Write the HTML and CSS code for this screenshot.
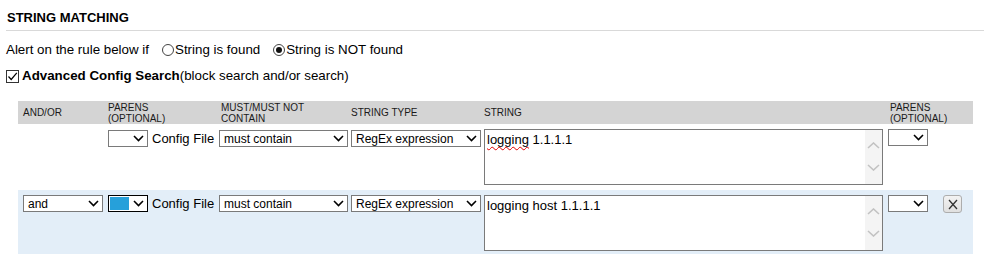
FILE: index.html
```html
<!DOCTYPE html>
<html lang="en">
<head>
  <meta charset="UTF-8" />
  <title>String Matching</title>
  <link rel="stylesheet" href="styles.css">
</head>
<body>
  <div class="page">
    <h3 class="section-title">STRING MATCHING</h3>

    <div class="alert-row">
      Alert on the rule below if
      <span class="radio-opt"><span class="radio"></span>String is found</span>
      <span class="radio-opt"><span class="radio checked"></span>String is NOT found</span>
    </div>

    <div class="check-row">
      <span class="checkbox">
        <svg width="11" height="11" viewBox="0 0 11 11"><path d="M1.5 5.5 L4.2 8.5 L9.8 1.8" fill="none" stroke="#000" stroke-width="1.2"/></svg>
      </span>
      <b>Advanced Config Search</b>(block search and/or search)
    </div>

    <div class="rules">
      <!-- column headings -->
      <div class="rules-head">
        <div>AND/OR</div>
        <div>PARENS<br>(OPTIONAL)</div>
        <div class="head-shift">MUST/MUST NOT<br>CONTAIN</div>
        <div>STRING TYPE</div>
        <div>STRING</div>
        <div class="head-shift">PARENS<br>(OPTIONAL)</div>
        <div></div>
      </div>

      <!-- first rule -->
      <div class="rule-row">
        <div></div>
        <div class="parens-cell low">
          <div class="select sel-parens"><span></span><svg class="chev" width="11" height="7" viewBox="0 0 11 7"><path d="M1 1 L5.5 5.5 L10 1" fill="none" stroke="#000" stroke-width="1.6"/></svg></div>
          <span class="src-label">Config File</span>
        </div>
        <div class="low"><div class="select sel-must"><span>must contain</span><svg class="chev" width="11" height="7" viewBox="0 0 11 7"><path d="M1 1 L5.5 5.5 L10 1" fill="none" stroke="#000" stroke-width="1.6"/></svg></div></div>
        <div class="low"><div class="select sel-type"><span>RegEx expression</span><svg class="chev" width="11" height="7" viewBox="0 0 11 7"><path d="M1 1 L5.5 5.5 L10 1" fill="none" stroke="#000" stroke-width="1.6"/></svg></div></div>
        <div class="textbox">
          <div class="textbox-text"><span class="spell">logging</span> 1.1.1.1</div>
          <div class="scrollbar">
            <svg width="13" height="7" viewBox="0 0 13 7"><path d="M1 6 L6.5 1 L12 6" fill="none" stroke="#c2c2c2" stroke-width="1.6"/></svg>
            <svg width="13" height="7" viewBox="0 0 13 7"><path d="M1 1 L6.5 6 L12 1" fill="none" stroke="#c2c2c2" stroke-width="1.6"/></svg>
          </div>
        </div>
        <div><div class="select sel-parens"><span></span><svg class="chev" width="11" height="7" viewBox="0 0 11 7"><path d="M1 1 L5.5 5.5 L10 1" fill="none" stroke="#000" stroke-width="1.6"/></svg></div></div>
        <div></div>
      </div>

      <!-- second rule -->
      <div class="rule-row alt">
        <div><div class="select sel-andor"><span>and</span><svg class="chev" width="11" height="7" viewBox="0 0 11 7"><path d="M1 1 L5.5 5.5 L10 1" fill="none" stroke="#000" stroke-width="1.6"/></svg></div></div>
        <div class="parens-cell">
          <div class="select sel-parens focused"><span class="picked"></span><svg class="chev" width="11" height="7" viewBox="0 0 11 7"><path d="M1 1 L5.5 5.5 L10 1" fill="none" stroke="#000" stroke-width="1.6"/></svg></div>
          <span class="src-label">Config File</span>
        </div>
        <div><div class="select sel-must"><span>must contain</span><svg class="chev" width="11" height="7" viewBox="0 0 11 7"><path d="M1 1 L5.5 5.5 L10 1" fill="none" stroke="#000" stroke-width="1.6"/></svg></div></div>
        <div><div class="select sel-type"><span>RegEx expression</span><svg class="chev" width="11" height="7" viewBox="0 0 11 7"><path d="M1 1 L5.5 5.5 L10 1" fill="none" stroke="#000" stroke-width="1.6"/></svg></div></div>
        <div class="textbox">
          <div class="textbox-text">logging host 1.1.1.1</div>
          <div class="scrollbar">
            <svg width="13" height="7" viewBox="0 0 13 7"><path d="M1 6 L6.5 1 L12 6" fill="none" stroke="#c2c2c2" stroke-width="1.6"/></svg>
            <svg width="13" height="7" viewBox="0 0 13 7"><path d="M1 1 L6.5 6 L12 1" fill="none" stroke="#c2c2c2" stroke-width="1.6"/></svg>
          </div>
        </div>
        <div><div class="select sel-parens"><span></span><svg class="chev" width="11" height="7" viewBox="0 0 11 7"><path d="M1 1 L5.5 5.5 L10 1" fill="none" stroke="#000" stroke-width="1.6"/></svg></div></div>
        <div>
          <button class="remove-btn" type="button" title="Remove">
            <svg width="10" height="11" viewBox="0 0 10 11"><path d="M1 1 L9 10 M9 1 L1 10" fill="none" stroke="#333" stroke-width="1.3"/></svg>
          </button>
        </div>
      </div>
    </div>
  </div>
</body>
</html>
```

FILE: styles.css
```css
body {
  margin: 0;
  font-family: "Liberation Sans", Arial, sans-serif;
  font-size: 13.33px;
  color: #000;
  background: #fff;
}

.page {
  padding: 10px 0 0 6px;
}

.section-title {
  margin: 0;
  padding: 0 0 4px 1px;
  font-size: 13px;
  line-height: 16px;
  font-weight: bold;
  border-bottom: 1px solid #d9d9d9;
}

.alert-row {
  margin-top: 11px;
  line-height: 16px;
  display: flex;
  align-items: center;
}

.radio-opt {
  display: flex;
  align-items: center;
  margin-left: 13px;
}

.radio {
  width: 12px;
  height: 12px;
  box-sizing: border-box;
  border: 1px solid #444;
  border-radius: 50%;
  margin-right: 1px;
  display: flex;
  align-items: center;
  justify-content: center;
}

.radio.checked::after {
  content: "";
  width: 6px;
  height: 6px;
  border-radius: 50%;
  background: #111;
}

.check-row {
  margin-top: 10px;
  line-height: 16px;
  display: flex;
  align-items: center;
}

.checkbox {
  width: 13px;
  height: 13px;
  box-sizing: border-box;
  border: 1px solid #333;
  margin-right: 3px;
  display: flex;
  align-items: center;
  justify-content: center;
}

.rules {
  margin: 17px 0 0 12px;
  width: 955px;
}

.rules-head,
.rule-row {
  display: grid;
  grid-template-columns: 85px 111px 132px 133px 404px 55px 30px;
  padding-left: 5px;
}

.rules-head {
  height: 23px;
  align-items: center;
  background: #d4d4d4;
  color: #1a1a1a;
  font-size: 10px;
  line-height: 11px;
}

.head-shift {
  padding-left: 2px;
}

.rule-row {
  margin-top: 2px;
  padding: 3px 0 3px 5px;
  align-items: start;
}

.rule-row.alt {
  background: #e3eef8;
  padding-top: 5px;
}

.low {
  margin-top: 1px;
}

.parens-cell {
  display: flex;
  align-items: center;
  gap: 4px;
}

.src-label {
  font-size: 13px;
  line-height: 16px;
}

.select {
  box-sizing: border-box;
  height: 17px;
  border: 1px solid #7a7a7a;
  background: #fff;
  display: flex;
  align-items: center;
  justify-content: space-between;
  padding: 0 3px 0 4px;
  font-size: 12px;
  line-height: 12px;
}

.sel-andor { width: 80px; }
.sel-parens { width: 40px; padding-left: 1px; }
.sel-must { width: 129px; }
.sel-type { width: 130px; }

.select.focused {
  border-color: #000;
}

.picked {
  width: 19px;
  height: 13px;
  background: #26a0da;
}

.textbox {
  box-sizing: border-box;
  width: 399px;
  height: 56px;
  border: 1px solid #7a7a7a;
  background: #fff;
  display: flex;
}

.textbox-text {
  flex: 1;
  padding: 2px 2px;
  font-size: 13px;
  line-height: 15px;
}

.spell {
  text-decoration: underline wavy #e00000;
  text-decoration-thickness: 1px;
  text-decoration-skip-ink: none;
  text-underline-offset: 2px;
}

.scrollbar {
  width: 17px;
  background: #f4f4f4;
  display: flex;
  flex-direction: column;
  justify-content: space-between;
  align-items: center;
  padding: 12px 0 13px;
}

.remove-btn {
  box-sizing: border-box;
  width: 19px;
  height: 18px;
  padding: 0;
  border: 1px solid #adadad;
  border-radius: 3px;
  background: linear-gradient(#f3f3f3, #e0e0e0);
  display: flex;
  align-items: center;
  justify-content: center;
}
```
